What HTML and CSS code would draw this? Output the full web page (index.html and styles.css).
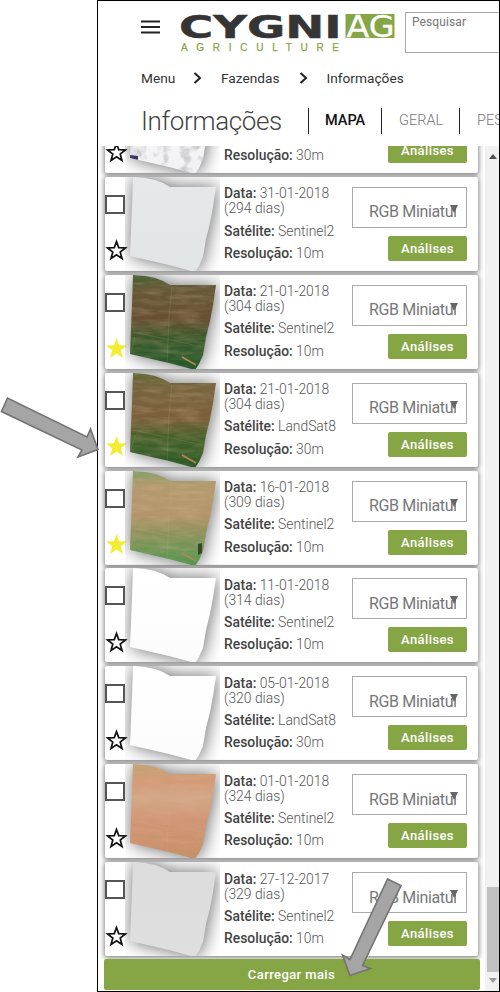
FILE: index.html
```html
<!DOCTYPE html>
<html lang="pt-BR">
<head>
<meta charset="utf-8">
<title>Informações</title>
<link rel="stylesheet" href="styles.css">
</head>
<body>
<svg class="defs" width="0" height="0" aria-hidden="true">
  <defs>
    <linearGradient id="cloud" x2="0" y2="1"><stop stop-color="#fff"/><stop offset="1" stop-color="#f1f1f4"/></linearGradient>
    <linearGradient id="mist" x2="0" y2="1"><stop stop-color="#e6e8ea"/><stop offset="1" stop-color="#e2e5e6"/></linearGradient>
    <linearGradient id="dark" x2="0" y2="1"><stop stop-color="#3f5c2b"/><stop offset=".14" stop-color="#655a38"/><stop offset=".45" stop-color="#694f32"/><stop offset=".66" stop-color="#3c5a2b"/><stop offset="1" stop-color="#215a2a"/></linearGradient>
    <linearGradient id="brown" x2="0" y2="1"><stop stop-color="#59652f"/><stop offset=".15" stop-color="#786540"/><stop offset=".48" stop-color="#7a6038"/><stop offset=".68" stop-color="#44602a"/><stop offset="1" stop-color="#285b25"/></linearGradient>
    <linearGradient id="light" x2="0" y2="1"><stop stop-color="#7f9f62"/><stop offset=".15" stop-color="#b39b6e"/><stop offset=".45" stop-color="#b5956b"/><stop offset=".68" stop-color="#879259"/><stop offset="1" stop-color="#51984f"/></linearGradient>
    <linearGradient id="white" x2="0" y2="1"><stop stop-color="#fff"/><stop offset="1" stop-color="#fcfcfd"/></linearGradient>
    <linearGradient id="sand" x2="0" y2="1"><stop stop-color="#c5a375"/><stop offset=".2" stop-color="#d59b78"/><stop offset=".35" stop-color="#d3a886"/><stop offset=".6" stop-color="#d19575"/><stop offset="1" stop-color="#c69067"/></linearGradient>
    <linearGradient id="grey" x2="0" y2="1"><stop stop-color="#dcdcdd"/><stop offset="1" stop-color="#dfdfdf"/></linearGradient>
    <clipPath id="field"><path d="M8 0L20 1L30 3L38 6L45 10H91L88 30L85 46L81 62L78 80L74 89L70 95L44 88L5 79L7 30Z"/></clipPath>
    <filter id="soil" x="0" y="0" width="1" height="1"><feTurbulence type="fractalNoise" baseFrequency=".04 .2" numOctaves="4" seed="4"/><feColorMatrix values="0 0 0 0 .75  0 0 0 0 .52  0 0 0 0 .36  1.4 0 0 0 -.5"/></filter>
    <filter id="puffs" x="0" y="0" width="1" height="1"><feTurbulence type="fractalNoise" baseFrequency=".09" numOctaves="3" seed="8"/><feColorMatrix values="0 0 0 0 .5  0 0 0 0 .5  0 0 0 0 .53  2.4 0 0 0 -1.1"/></filter>
  </defs>
</svg>
<div class="frame">
  <header class="topbar">
    <svg class="burger" width="20" height="14" viewBox="0 0 20 14"><path d="M0 1.5h19M0 7h19M0 12.5h19"/></svg>
    <svg class="logo" width="216" height="42" viewBox="0 0 216 42">
      <text class="logo-name" x="-2" y="26.500" textLength="162.500" lengthAdjust="spacingAndGlyphs">CYGNI</text>
      <rect class="logo-box" x="164.500" y="3" width="49" height="24"/>
      <text class="logo-ag" x="165.500" y="26" textLength="48" lengthAdjust="spacingAndGlyphs">AG</text>
      <text class="logo-sub" x="0" y="40" textLength="158">AGRICULTURE</text>
    </svg>
    <div class="search">Pesquisar</div>
  </header>
  <nav class="crumbs">
    <span class="crumb-menu">Menu</span>
    <svg width="9" height="12" viewBox="0 0 9 12"><path d="M1.5 1L7 6L1.5 11"/></svg>
    <span class="crumb-farms">Fazendas</span>
    <svg width="9" height="12" viewBox="0 0 9 12"><path d="M1.5 1L7 6L1.5 11"/></svg>
    <span class="crumb-info">Informações</span>
  </nav>
  <div class="heading">
    <h1>Informações</h1>
    <div class="tabs">
      <span class="tab tab-map active">MAPA</span><span class="tab tab-general">GERAL</span><span class="tab">PESQUISA</span>
    </div>
  </div>
  <main class="panel">
    <div class="content">
      <div class="list" id="list"></div>
      <button class="more">Carregar mais</button>
    </div>
    <div class="scrollbar">
      <svg class="up" width="8" height="5"><path d="M0 5L4 0L8 5Z"/></svg>
      <div class="thumb"></div>
      <svg class="down" width="8" height="5"><path d="M0 0L4 5L8 0Z"/></svg>
    </div>
  </main>
</div>
<svg class="arrows" width="500" height="992" viewBox="0 0 500 992">
  <path d="M7.5 398L1.5 411.5L82 450L78 457L98 449.5L90.500 429L87 437Z"/>
  <path d="M387.500 879L401 885.500L362.500 965.500L370.500 968.500L350 975.500L342.500 955L350 959.500Z"/>
</svg>
<script src="script.js"></script>
</body>
</html>
```
FILE: styles.css
```css
* { box-sizing: border-box; }
body { margin: 0; width: 500px; height: 992px; overflow: hidden; background: #fff; font-family: Roboto, "Liberation Sans", sans-serif; position: relative; }
.defs { position: absolute; }
.frame { margin-left: 97px; width: 403px; height: 992px; border: 1px solid #000; overflow: hidden; display: flex; flex-direction: column; }
.topbar { height: 60px; flex: none; display: flex; align-items: flex-start; padding: 10px 0 0 43px; }
.burger { flex: none; margin-top: 9px; }
.burger path { stroke: #222; stroke-width: 1.8; }
.logo { flex: none; margin-left: 20px; overflow: visible; }
.logo-name { font: bold 32px "DejaVu Sans", sans-serif; fill: #353535; stroke: #353535; stroke-width: .5; }
.logo-box { fill: #86a646; }
.logo-ag { font: 31px "DejaVu Sans", sans-serif; fill: #fff; stroke: #fff; stroke-width: .3; }
.logo-sub { font: 10px "Liberation Sans", sans-serif; fill: #86a646; stroke: #86a646; stroke-width: .25; }
.search { flex: none; width: 130px; height: 41px; margin: 1px 0 0 8px; border: 1px solid #aaa; padding: 2px 6px; font-size: 12px; line-height: 14px; letter-spacing: .1px; color: #757575; }
.crumbs { height: 34px; flex: none; display: flex; align-items: center; padding-left: 43px; font-size: 13.700px; color: #333; }
.crumbs svg { margin-right: 19px; flex: none; }
.crumbs path { fill: none; stroke: #222; stroke-width: 2; }
.crumb-menu { width: 52px; }
.crumb-farms { width: 77.500px; }
.heading { height: 51px; flex: none; display: flex; align-items: center; padding-left: 43px; }
h1 { margin: 0; width: 167px; flex: none; font-size: 26px; letter-spacing: -.35px; font-weight: 300; line-height: 30px; color: #444; }
.tabs { display: flex; flex: none; }
.tab { height: 26px; padding-left: 17px; border-left: 1px solid #222; line-height: 25px; font-size: 14.500px; color: #777; font-weight: 300; }
.tab-map { width: 73px; padding-left: 16px; }
.tab-general { width: 78px; }
.tab.active { color: #111; font-weight: 500; }
.panel { flex: 1; display: flex; justify-content: space-between; min-height: 0; }
.content { width: 387px; display: flex; flex-direction: column; }
.list { height: 813px; flex: none; overflow: hidden; display: flex; flex-direction: column; justify-content: flex-end; gap: 3.900px; padding: 0 7.300px 2.900px 7px; }
.card { flex: none; height: 94px; border-radius: 2px; background: #fff; box-shadow: 0 1px 5px 1px rgba(0,0,0,.48); display: flex; }
.marks { width: 20px; flex: none; padding-top: 18px; display: flex; flex-direction: column; justify-content: space-between; }
.check { width: 20px; height: 19px; border: 2px solid #555; }
.star { display: block; margin: 0 0 10.500px .5px; width: 21px; height: 20px; overflow: visible; }
.star path { fill: #fff; stroke: #111; stroke-width: 1.700; }
.star.on path { fill: #f2ed30; stroke: none; }
.thumbnail { width: 95px; flex: none; height: 94px; overflow: hidden; }
.thumbnail svg { display: block; filter: drop-shadow(1px 0 9px rgba(0,0,0,.6)); }
.meta { width: 132px; flex: none; padding: 9.400px 0 0 4px; font-size: 13.900px; letter-spacing: -.01px; line-height: 15px; font-weight: 300; color: #555; white-space: nowrap; }
.meta p { margin: 0 0 7.300px; }
.meta p:empty { height: 15px; }
.meta p:first-child { height: 30px; }
.meta b { font-weight: 500; color: #444; }
.actions { width: 115px; flex: none; display: flex; flex-direction: column; align-items: flex-end; padding-top: 10px; gap: 8px; }
.select { width: 115px; height: 41px; flex: none; border: 1px solid #aaa; padding: 14.500px 10px 0 16px; font-size: 16px; letter-spacing: -.35px; line-height: 19px; color: #777; white-space: nowrap; position: relative; }
.select span { display: block; overflow: hidden; }
.select svg { position: absolute; right: 8px; top: 17px; fill: #666; }
.analyze { border: 0; border-radius: 2px; width: 79px; height: 25px; padding: 0; background: #86a646; color: #fff; font: 500 13px Roboto, sans-serif; letter-spacing: .4px; }
.more { width: 376px; height: 31px; margin-left: 5.500px; flex: none; border: 0; border-radius: 2px; padding: 0 0 1px; background: #86a646; color: #fff; font: 500 13px Roboto, sans-serif; letter-spacing: .4px; }
.scrollbar { width: 14px; padding: 8px 0 8px 2px; background: #f1f1f1; display: flex; flex-direction: column; align-items: center; }
.scrollbar svg { fill: #505050; flex: none; }
.scrollbar .down { fill: #999; margin-top: 6px; }
.thumb { width: 12px; height: 85px; flex: none; margin-top: auto; background: #c1c1c1; }
.arrows { position: absolute; left: 0; top: 0; }
.arrows path { fill: #a5a5a5; stroke: #737373; stroke-width: 1.600; }
```
FILE: script.js
```js
const images = [
  ["", "", "", "30m", "cloud", false],
  ["31-01-2018", 294, "Sentinel2", "10m", "mist", false],
  ["21-01-2018", 304, "Sentinel2", "10m", "dark", true],
  ["21-01-2018", 304, "LandSat8", "30m", "brown", true],
  ["16-01-2018", 309, "Sentinel2", "10m", "light", true],
  ["11-01-2018", 314, "Sentinel2", "10m", "white", false],
  ["05-01-2018", 320, "LandSat8", "30m", "white", false],
  ["01-01-2018", 324, "Sentinel2", "10m", "sand", false],
  ["27-12-2017", 329, "Sentinel2", "10m", "grey", false]
];
const texture = kind => {
  if (kind === "cloud") return '<rect width="95" height="95" filter="url(#puffs)"/><path d="M5 76l8 1v5l-8-2z" fill="#3b3563"/>';
  if (!["dark", "brown", "light", "sand"].includes(kind)) return "";
  const soil = `<rect width="95" height="95" filter="url(#soil)" opacity="${kind === "sand" ? .25 : .35}"/>`;
  const tracks = '<path d="M47 12L44 42L42 90M10 62L5 80M8 57L78 72" fill="none" stroke="#c8b58a" stroke-opacity=".18"/>';
  const road = kind === "sand" ? "" : '<path d="M57 82L71 90" stroke="#b78657" stroke-width="1.5"/>';
  const pond = kind === "light" ? '<path d="M73 73l4-1v10l-4 2z" fill="#33482a"/>' : "";
  return soil + tracks + road + pond;
};
document.getElementById("list").innerHTML = images.map(([date, days, sat, res, kind, on]) => `
<article class="card">
  <div class="marks"><div class="check"></div>
    <svg class="star${on ? " on" : ""}" viewBox="0 0 21 20"><path d="${on
      ? "M10.500 0L13 7.200L21 7.500L14.700 12.200L17 20L10.500 15.400L4 20L6.300 12.200L0 7.500L8 7.200Z"
      : "M10.500 1.500L12.700 7.600L19.400 7.900L14.200 12L16 18.500L10.500 14.800L5 18.500L6.800 12L1.600 7.900L8.300 7.600Z"}"/></svg></div>
  <div class="thumbnail"><svg width="95" height="95"><g clip-path="url(#field)"><rect width="95" height="95" fill="url(#${kind})"/>${texture(kind)}</g></svg></div>
  <div class="meta"><p>${date ? `<b>Data:</b> ${date}<br>(${days} dias)` : ""}</p><p>${sat ? `<b>Satélite:</b> ${sat}` : ""}</p><p><b>Resolução:</b> ${res}</p></div>
  <div class="actions"><div class="select">${date ? "<span>RGB Miniatura</span>" : ""}<svg width="8" height="8"><path d="M0 0H8L4 8Z"/></svg></div><button class="analyze">Análises</button></div>
</article>`).join("");
```
